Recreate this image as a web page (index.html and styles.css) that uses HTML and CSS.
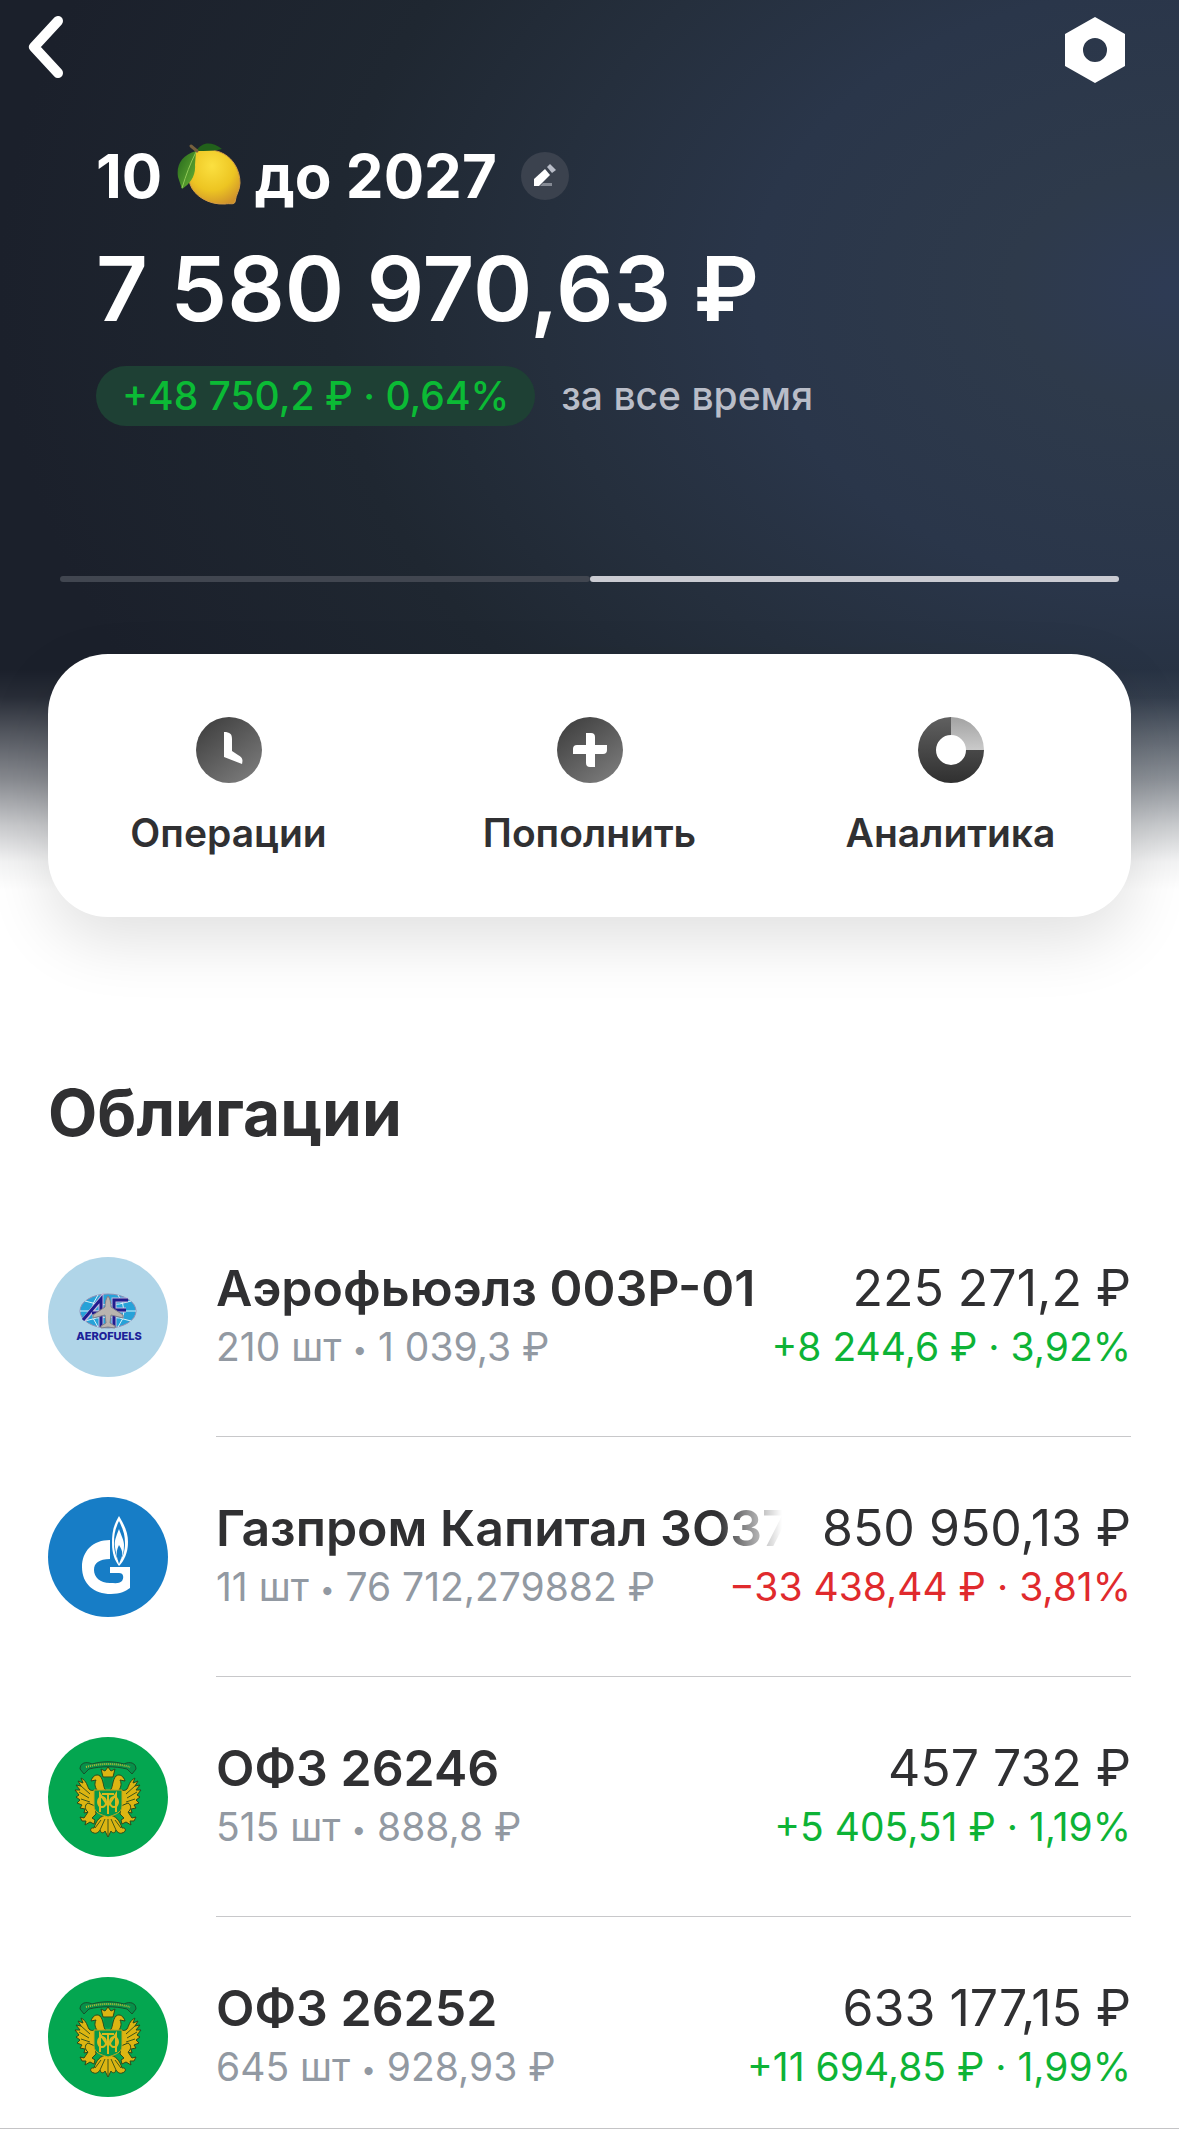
FILE: index.html
```html
<!DOCTYPE html>
<html lang="ru">
<head>
  <meta charset="utf-8">
  <meta name="viewport" content="width=device-width, initial-scale=1">
  <title>Портфель</title>
  <link rel="stylesheet" href="styles.css">
</head>
<body>
  <svg class="sprite" aria-hidden="true">
    <symbol id="crest" viewBox="0 0 120 120">
      <circle cx="60" cy="60" r="60" fill="#04a650"/>
      <g fill="#dcb512" stroke="#2c4a1a" stroke-width="1" stroke-linejoin="round">
        <path d="M52 50C48 53 44 55 41 52C39 49 39 44 33 41L35 46L30 44L33 49L28 48L32 53L27 53L31 58L28 60L32 63L29 66L34 68L32 71L37 72L36 76L46 74Z"/>
        <path d="M68 50C72 53 76 55 79 52C81 49 81 44 87 41L85 46L90 44L87 49L92 48L88 53L93 53L89 58L92 60L88 63L91 66L86 68L88 71L83 72L84 76L74 74Z"/>
        <path d="M40 66C36 68 37 73 40 75L36 81L32 80L34 84L38 84L37 88L42 85L46 87L47 83L44 81L48 77L47 69Z"/>
        <path d="M80 66C84 68 83 73 80 75L84 81L88 80L86 84L82 84L83 88L78 85L74 87L73 83L76 81L72 77L73 69Z"/>
        <path d="M60 78C52 78 48 84 46 91C42 90 41 95 46 96C48 97 51 95 52 93C53 97 56 96 57 94L60 100L63 94C64 96 67 97 68 93C69 95 72 97 74 96C79 95 78 90 74 91C72 84 68 78 60 78Z"/>
        <path d="M58 53C55 52 56 43 52 39C48 36 44 40 43 44L48 43C46 47 47 51 50 54Z"/>
        <path d="M62 53C65 52 64 43 68 39C72 36 76 40 77 44L72 43C74 47 73 51 70 54Z"/>
        <path d="M53 32L57 34L60 30L63 34L67 32L65 40H55Z"/>
      </g>
      <path d="M32 32C32 26 38 24 44 27C54 24 66 24 76 27C82 24 88 26 88 32L84 37L79 32C67 29 53 29 41 32L36 37Z" fill="#07904a" stroke="#17502b"/>
      <path d="M38 30C52 26 68 26 82 30" fill="none" stroke="#b8bd35" stroke-width="2" stroke-dasharray="1 1"/>
      <path d="M56 41H64V46Q64 50 60 51Q56 50 56 46Z" fill="#079348"/>
      <path d="M46 53H74V69C74 76 66 78 60 80C54 78 46 76 46 69Z" fill="#05994b" stroke="#c9a91b"/>
      <g fill="none" stroke="#dbb91d" stroke-width="2">
        <path d="M52 75V57L60 69L68 57V75M60 56V77M54 57H66"/>
        <ellipse cx="54" cy="65" rx="4" ry="5"/><ellipse cx="66" cy="65" rx="4" ry="5"/>
      </g>
      <path d="M60 82V98M57 82L52 93M63 82L68 93M53 83L47 91M67 83L73 91M33 49L42 57M31 55L41 61M33 62L42 65M87 49L78 57M89 55L79 61M87 62L78 65" fill="none" stroke="#3f5718"/>
    </symbol>
  </svg>

  <header class="hero">
    <nav class="topbar" aria-label="Навигация">
      <button class="icon-button" type="button" aria-label="Назад">
        <svg width="36" height="62" viewBox="0 0 36 62" aria-hidden="true"><path d="M30 5L6 31L30 57" fill="none" stroke="#fff" stroke-width="10" stroke-linecap="round" stroke-linejoin="round"/></svg>
      </button>
      <button class="icon-button" type="button" aria-label="Настройки">
        <svg width="60" height="68" viewBox="0 0 60 68" aria-hidden="true"><path fill="#fff" fill-rule="evenodd" d="M30 1L60 18V50L30 67L0 50V18ZM30 22A12 12 0 1 0 30 46A12 12 0 1 0 30 22Z"/></svg>
      </button>
    </nav>

    <div class="summary">
      <div class="goal">
        <h1 class="goal-name">10
          <svg class="lemon" viewBox="0 0 64 64" role="img" aria-label="лимон">
            <defs>
              <radialGradient id="peel" cx=".45" cy=".3" r=".75"><stop offset="0" stop-color="#fbe040"/><stop offset=".6" stop-color="#edc522"/><stop offset="1" stop-color="#cf922b"/></radialGradient>
              <linearGradient id="leaf" x2="1" y2="1"><stop offset="0" stop-color="#23651c"/><stop offset="1" stop-color="#6bb534"/></linearGradient>
            </defs>
            <path d="M19 8C27 7 38 7 47 12C56 17 63 28 63 41C63 48 59 52 58 60C57 63 53 61 48 62C32 63 17 54 13 42C10 31 15 18 19 8Z" fill="url(#peel)" stroke="#d69d43"/>
            <path d="M19 9C25 0 34-1 45 7C38 9 29 9 19 9Z" fill="#22611b"/>
            <path d="M19 9C5 13-1 23 1 35L5 47C13 42 19 34 18 23Z" fill="url(#leaf)"/>
            <path d="M19 10C13 22 9 33 5 46" fill="none" stroke="#91c958"/>
            <path d="M14 4L20 9" stroke="#76603d" stroke-width="3" stroke-linecap="round"/>
          </svg>
          до 2027</h1>
        <button class="edit" type="button" aria-label="Переименовать">
          <svg width="22" height="24" viewBox="0 0 22 24" aria-hidden="true"><path d="M0 22V15L11 5L16 11L5 22Z" fill="#fff"/><path d="M13 3L16 0L22 6L18 9Z" fill="#b9bdc8"/><path d="M6 22L9 19H18V22Z" fill="#858a94"/></svg>
        </button>
      </div>
      <p class="total">7 580 970,63 ₽</p>
      <p class="result"><span class="badge">+48 750,2 ₽ · 0,64%</span><span class="period">за все время</span></p>
    </div>

    <div class="pager" aria-hidden="true"><span class="page"></span><span class="page current"></span></div>

    <div class="actions">
      <button class="action" type="button">
        <svg class="action-icon" viewBox="0 0 66 66" aria-hidden="true">
          <defs><linearGradient id="tone" x1=".2" y1=".1" x2=".8" y2=".9"><stop stop-color="#444"/><stop offset="1" stop-color="#777"/></linearGradient></defs>
          <circle cx="33" cy="33" r="33" fill="url(#tone)"/><path d="M28 15C34 15 36 17 36 22V34L42 38C47 41 47 43 46 47L28 40Z" fill="#fff"/>
        </svg>
        Операции
      </button>
      <button class="action" type="button">
        <svg class="action-icon" viewBox="0 0 66 66" aria-hidden="true"><circle cx="33" cy="33" r="33" fill="url(#tone)"/><path d="M29 16H34Q38 16 38 20V28H50V33Q50 37 46 37H38V50H33Q29 50 29 46V37H16V32Q16 28 20 28H29Z" fill="#fff"/></svg>
        Пополнить
      </button>
      <button class="action" type="button">
        <svg class="action-icon" viewBox="0 0 66 66" aria-hidden="true">
          <defs>
            <linearGradient id="ring" x2="0" y2="1"><stop stop-color="#606060"/><stop offset="1" stop-color="#303030"/></linearGradient>
            <linearGradient id="slice" x2="0" y2="1"><stop stop-color="#a2a2a2"/><stop offset="1" stop-color="#cacaca"/></linearGradient>
          </defs>
          <path d="M33 0A33 33 0 1 0 66 33H48A15 15 0 1 1 33 18Z" fill="url(#ring)"/><path d="M33 0A33 33 0 0 1 66 33H48A15 15 0 0 0 33 18Z" fill="url(#slice)"/>
        </svg>
        Аналитика
      </button>
    </div>
  </header>

  <main class="holdings">
    <h2 class="section-title">Облигации</h2>
    <ul class="list">
      <li class="row">
        <svg class="logo" viewBox="0 0 120 120" role="img" aria-label="Aerofuels">
          <circle cx="60" cy="60" r="60" fill="#b0d5e8"/>
          <ellipse cx="60" cy="54" rx="28" ry="17" fill="#27a2d8" stroke="#8f8fb6"/>
          <path d="M32 54H88M37 44Q60 52 83 44M37 64Q60 56 83 64M50 38Q38 54 50 70M70 38Q82 54 70 70" fill="none" stroke="#d6f3fb"/>
          <path d="M36 63L53 42V70M44 56H52M66 70V43H80M67 53H78" fill="none" stroke="#c5b9dc" stroke-width="5"/>
          <path d="M35 63L53 42V70M44 56H52M66 70V43H80M67 53H78" fill="none" stroke="#201c8e" stroke-width="3"/>
          <path d="M60 39C62 41 63 46 63 50L75 58V61L63 58L62 66L67 69V71L60 70L53 71V69L58 66L57 58L45 61V58L57 50C57 46 58 41 60 39Z" fill="#b9b4af" stroke="#817f8a"/>
          <text class="logo-text" x="61" y="83" text-anchor="middle">AEROFUELS</text>
        </svg>
        <div class="details">
          <div class="line primary"><span class="name">Аэрофьюэлз 003Р-01</span><span class="value">225 271,2 ₽</span></div>
          <div class="line secondary"><span class="quantity">210 шт <span class="bullet">•</span> 1 039,3 ₽</span><span class="up">+8 244,6 ₽ · 3,92%</span></div>
        </div>
      </li>
      <li class="row">
        <svg class="logo" viewBox="0 0 120 120" role="img" aria-label="Газпром">
          <circle cx="60" cy="60" r="60" fill="#177dc6"/>
          <path d="M62 43C45 43 34 54 34 70C34 87 46 97 63 97C72 97 78 94 82 91V70H62V76H71C76 76 76 81 74 84C71 87 67 86 62 86C52 86 46 80 46 73C46 66 51 62 62 62Z" fill="#fff"/>
          <path d="M71 19C65 29 64 36 64 46C64 57 67 64 71 69C76 64 80 56 80 45C80 36 77 29 71 19Z" fill="#fff"/>
          <path d="M71 24C67 32 66 38 66 46C66 54 68 60 71 65C75 60 77 54 77 46C77 38 75 32 71 24Z" fill="#177dc6"/>
          <path d="M71 32C68 40 66 44 67 50C68 57 69 61 71 66C75 60 76 54 76 48C76 43 73 38 71 32Z" fill="#fff"/>
          <path d="M71 48C69 52 68 56 69 60L71 67L74 59C75 55 73 51 71 48Z" fill="#177dc6"/>
        </svg>
        <div class="details">
          <div class="line primary"><span class="name faded">Газпром Капитал ЗО37</span><span class="value">850 950,13 ₽</span></div>
          <div class="line secondary"><span class="quantity">11 шт <span class="bullet">•</span> 76 712,279882 ₽</span><span class="down">−33 438,44 ₽ · 3,81%</span></div>
        </div>
      </li>
      <li class="row">
        <svg class="logo" role="img" aria-label="Минфин России"><use href="#crest"/></svg>
        <div class="details">
          <div class="line primary"><span class="name">ОФЗ 26246</span><span class="value">457 732 ₽</span></div>
          <div class="line secondary"><span class="quantity">515 шт <span class="bullet">•</span> 888,8 ₽</span><span class="up">+5 405,51 ₽ · 1,19%</span></div>
        </div>
      </li>
      <li class="row">
        <svg class="logo" role="img" aria-label="Минфин России"><use href="#crest"/></svg>
        <div class="details">
          <div class="line primary"><span class="name">ОФЗ 26252</span><span class="value">633 177,15 ₽</span></div>
          <div class="line secondary"><span class="quantity">645 шт <span class="bullet">•</span> 928,93 ₽</span><span class="up">+11 694,85 ₽ · 1,99%</span></div>
        </div>
      </li>
    </ul>
  </main>
</body>
</html>
```
FILE: styles.css
```css
* {
  box-sizing: border-box;
}

body {
  margin: 0;
  background: #fff;
  color: #303032;
  font-family: Inter, "Liberation Sans", sans-serif;
}

h1, h2, p, ul {
  margin: 0;
  padding: 0;
}

button {
  border: 0;
  padding: 0;
  background: none;
  color: inherit;
  font: inherit;
}

.sprite {
  display: none;
}

.hero {
  padding: 16px 48px 0;
  background:
    linear-gradient(to bottom, transparent 73%, rgba(255, 255, 255, .06) 76%, rgba(255, 255, 255, .25) 80%, rgba(255, 255, 255, .48) 85%, rgba(255, 255, 255, .76) 90%, rgba(255, 255, 255, .95) 94%, #fff 97%),
    radial-gradient(ellipse 1180px 840px at 100% 290px, #2e3b55 0%, #2e3a4b 14%, #2a364a 36%, #252f3d 54%, #1f2731 72%, #1b202b 100%);
}

.topbar {
  display: flex;
  justify-content: space-between;
  margin: 0 6px 0 -20px;
}

.icon-button {
  display: flex;
}

.summary {
  padding: 56px 48px 0;
}

.goal {
  display: flex;
  align-items: center;
  gap: 24px;
  color: #fff;
}

.goal-name {
  font-size: 60px;
  font-weight: 700;
  line-height: 72px;
  white-space: nowrap;
}

.lemon {
  width: 64px;
  height: 64px;
  vertical-align: -8px;
}

.edit {
  display: flex;
  align-items: center;
  justify-content: center;
  width: 48px;
  height: 48px;
  border-radius: 50%;
  background: #3b424e;
}

.total {
  margin-top: 22px;
  color: #fff;
  font-size: 90px;
  font-weight: 600;
  line-height: 110px;
  white-space: nowrap;
}

.result {
  display: flex;
  align-items: center;
  gap: 26px;
  margin-top: 22px;
  font-size: 39px;
  font-weight: 500;
  line-height: 60px;
  white-space: nowrap;
}

.badge {
  padding: 0 26px;
  border-radius: 30px;
  background: #1e4034;
  color: #0bbb35;
}

.period {
  color: #b9bdc8;
}

.pager {
  display: flex;
  margin: 150px 12px 0;
}

.page {
  flex: 1;
  height: 6px;
  border-radius: 3px;
  background: #414650;
}

.page.current {
  background: #cacbd2;
}

.actions {
  display: grid;
  grid-template-columns: repeat(3, 1fr);
  margin-top: 72px;
  padding: 63px 0 60px;
  border-radius: 60px;
  background: #fff;
  box-shadow: 0 24px 64px rgba(0, 0, 0, .12);
}

.action {
  display: flex;
  flex-direction: column;
  align-items: center;
  gap: 26px;
  font-size: 39px;
  font-weight: 600;
  line-height: 48px;
}

.action-icon {
  width: 66px;
  height: 66px;
}

.holdings {
  padding: 156px 0 0;
}

.section-title {
  padding: 0 48px;
  font-size: 64px;
  font-weight: 700;
  line-height: 80px;
}

.list {
  padding-top: 44px;
  border-bottom: 1px solid #c4c4c6;
  list-style: none;
}

.row {
  display: flex;
  gap: 48px;
  padding: 0 48px;
}

.logo {
  flex: none;
  width: 120px;
  height: 120px;
  margin-top: 60px;
}

.logo-text {
  fill: #1c2298;
  font-size: 11px;
  font-weight: 800;
}

.details {
  flex: 1;
  min-width: 0;
  height: 240px;
  padding-top: 60px;
  border-bottom: 1px solid #c8c8ca;
}

.row:last-child .details {
  height: 211px;
  border-bottom: 0;
}

.line {
  display: flex;
  justify-content: space-between;
  gap: 40px;
  white-space: nowrap;
}

.primary {
  font-size: 50px;
  line-height: 62px;
}

.secondary {
  font-size: 39px;
  line-height: 56px;
}

.name {
  min-width: 0;
  overflow: hidden;
  font-weight: 600;
}

.faded {
  -webkit-mask-image: linear-gradient(to left, transparent, #000 64px);
  mask-image: linear-gradient(to left, transparent, #000 64px);
}

.quantity {
  color: #9299a2;
}

.bullet {
  font-size: 26px;
  vertical-align: 2px;
}

.up {
  color: #0db336;
}

.down {
  color: #e02a2d;
}
```
